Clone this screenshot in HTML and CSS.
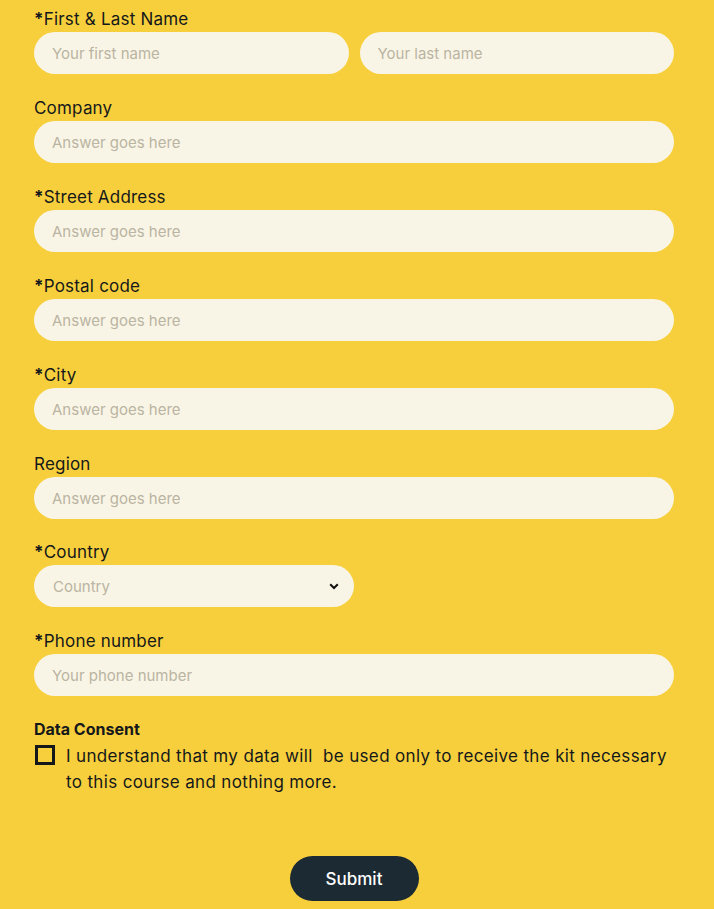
FILE: index.html
```html
<!DOCTYPE html>
<html>
<head>
<meta charset="utf-8">
<link rel="stylesheet" href="styles.css">
</head>
<body>
<form class="form">
  <div class="field">
    <label class="label"><span class="req">*</span>First &amp; Last Name</label>
    <div class="row">
      <input class="input" placeholder="Your first name">
      <input class="input" placeholder="Your last name">
    </div>
  </div>
  <div class="field">
    <label class="label">Company</label>
    <input class="input" placeholder="Answer goes here">
  </div>
  <div class="field">
    <label class="label"><span class="req">*</span>Street Address</label>
    <input class="input" placeholder="Answer goes here">
  </div>
  <div class="field">
    <label class="label"><span class="req">*</span>Postal code</label>
    <input class="input" placeholder="Answer goes here">
  </div>
  <div class="field">
    <label class="label"><span class="req">*</span>City</label>
    <input class="input" placeholder="Answer goes here">
  </div>
  <div class="field field-tight">
    <label class="label">Region</label>
    <input class="input" placeholder="Answer goes here">
  </div>
  <div class="field">
    <label class="label"><span class="req">*</span>Country</label>
    <div class="select">
      <span class="select-text">Country</span>
      <svg class="chev" width="10" height="7" viewBox="0 0 10 7"><path d="M1.2 1.2 L5 5 L8.8 1.2" fill="none" stroke="#111" stroke-width="2"/></svg>
    </div>
  </div>
  <div class="field">
    <label class="label"><span class="req">*</span>Phone number</label>
    <input class="input" placeholder="Your phone number">
  </div>
  <div class="consent">
    <div class="consent-title">Data Consent</div>
    <div class="consent-row">
      <span class="box"></span>
      <span class="consent-text">I understand that my data will&nbsp; be used only to receive the kit necessary to this course and nothing more.</span>
    </div>
  </div>
  <div class="actions">
    <button type="button" class="submit">Submit</button>
  </div>
</form>
</body>
</html>
```
FILE: styles.css
```css
html, body {
  margin: 0;
  padding: 0;
  background: #f7cf3d;
}
body {
  font-family: "Inter", "Liberation Sans", sans-serif;
  color: #15181a;
}
.form {
  padding: 8px 40px 0 34px;
  display: flex;
  flex-direction: column;
}
.field {
  display: flex;
  flex-direction: column;
  margin-bottom: 23px;
}
.field-tight {
  margin-bottom: 22px;
}
.label {
  font-size: 17px;
  line-height: 22px;
  height: 24px;
  letter-spacing: 0.2px;
}
.req {
  font-weight: 700;
}
.row {
  display: flex;
  gap: 11px;
}
.row .input {
  flex: 1;
  min-width: 0;
}
.input {
  box-sizing: border-box;
  height: 42px;
  border: none;
  border-radius: 21px;
  background: #f9f5e6;
  padding: 0 18px;
  font-family: inherit;
  font-size: 15px;
  color: #333;
  outline: none;
  width: 100%;
}
.input::placeholder {
  color: #bab4a2;
}
.select {
  box-sizing: border-box;
  width: 320px;
  height: 42px;
  border-radius: 21px;
  background: #f9f5e6;
  display: flex;
  align-items: center;
  justify-content: space-between;
  padding: 0 15px 0 19px;
}
.select-text {
  font-size: 15px;
  color: #bab4a2;
}
.consent-title {
  font-weight: 700;
  font-size: 16px;
  line-height: 20px;
}
.consent-row {
  display: flex;
  align-items: flex-start;
  margin-top: 4px;
}
.box {
  flex: none;
  box-sizing: border-box;
  width: 20px;
  height: 20px;
  border: 3px solid #15181a;
  margin: 2px 11px 0 1px;
}
.consent-text {
  font-size: 17px;
  line-height: 26px;
  letter-spacing: 0.35px;
}
.actions {
  display: flex;
  justify-content: center;
  margin-top: 61px;
}
.submit {
  width: 129px;
  height: 45px;
  border: none;
  border-radius: 23px;
  background: #1b2a33;
  color: #fff;
  font-family: inherit;
  font-size: 17px;
  font-weight: 500;
}
```
